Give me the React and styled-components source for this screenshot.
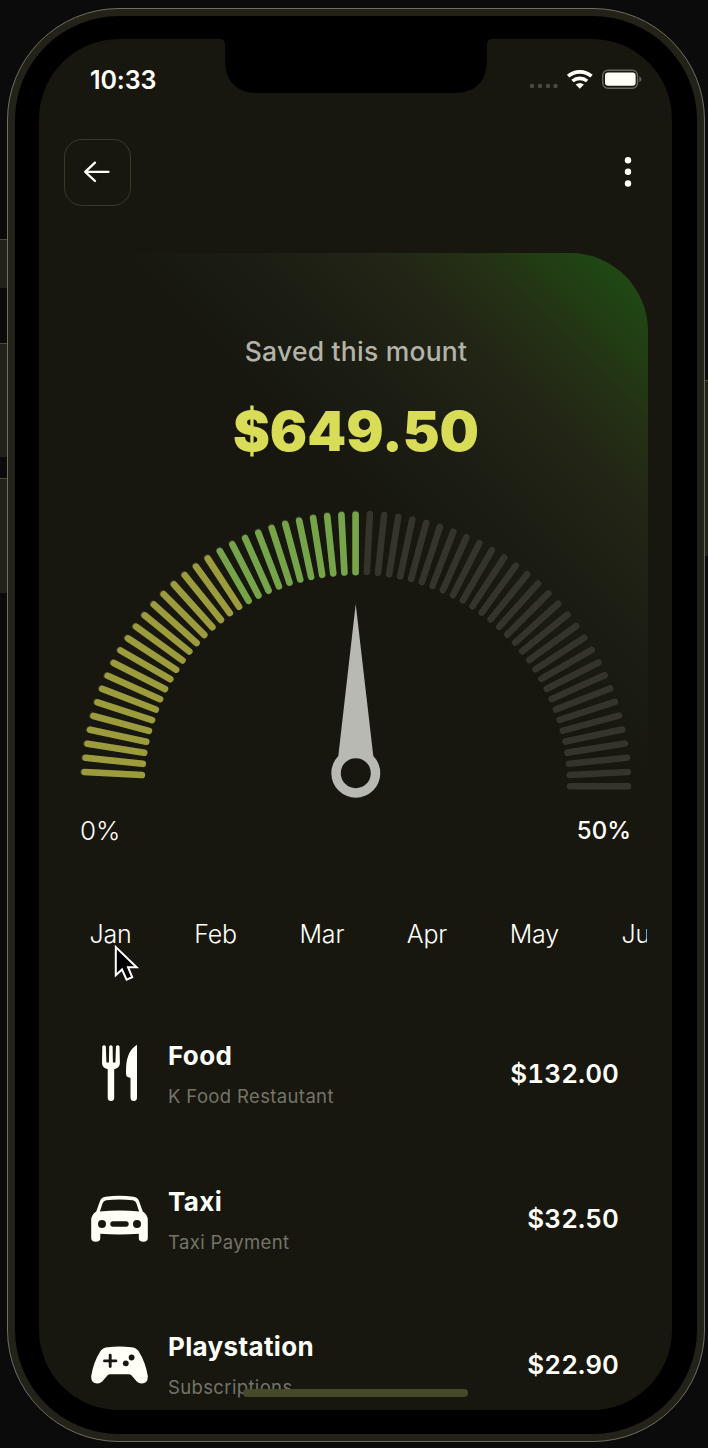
import React from "react";
import styled, { createGlobalStyle } from "styled-components";

const colors = {
  backdrop: "#0b0b0b",
  screen: "#171710",
  rim: "#222219",
  rimLine: "#6e6e62",
  white: "#fffff8",
  muted: "#747468",
  lime: "#d8dc56",
  tickOff: "#34342c",
  tickYellow: "#9c9c3c",
  tickGreen: "#76a448",
  needle: "#b9b9b4",
};

const GlobalStyle = createGlobalStyle`
  * { box-sizing: border-box; }
  body {
    margin: 0;
    background: ${colors.backdrop};
    font-family: Inter, "Liberation Sans", sans-serif;
    color: ${colors.white};
    overflow: hidden;
  }
`;

const Page = styled.main`
  position: relative;
  width: 708px;
  height: 1448px;
  padding: 8px 3px 6px 7px;
  overflow: hidden;
`;

const SideButton = styled.span`
  position: absolute;
  left: 0;
  top: ${(p) => p.$top}px;
  width: 7px;
  height: ${(p) => p.$height}px;
  background: ${colors.rim};
  border-top: 1px solid #4a4a3e;
`;

const PowerButton = styled.span`
  position: absolute;
  right: 0;
  top: 380px;
  width: 3px;
  height: 176px;
  background: ${colors.rim};
  border-top: 1px solid #4a4a3e;
`;

const Rim = styled.div`
  position: relative;
  height: 1434px;
  padding: 7px;
  border: 1px solid ${colors.rimLine};
  border-radius: 112px;
  background: ${colors.rim};
`;

const Bezel = styled.div`
  height: 1418px;
  padding: 23px 25px 24px 24px;
  border-radius: 104px;
  background: #000;
`;

const Screen = styled.div`
  position: relative;
  height: 1371px;
  border-radius: 80px;
  background: ${colors.screen};
  overflow: hidden;
`;

const NotchShape = styled.svg`
  position: absolute;
  left: 180px;
  top: 0;
`;

const StatusBar = styled.div`
  display: flex;
  align-items: center;
  justify-content: space-between;
  height: 81px;
  padding: 0 30px 0 51px;
`;

const Clock = styled.time`
  font-size: 25px;
  line-height: 30px;
  font-weight: 600;
  letter-spacing: -0.1px;
`;

const Header = styled.header`
  display: flex;
  align-items: center;
  justify-content: space-between;
  height: 67px;
  margin-top: 19px;
  padding: 0 40px 0 25px;
`;

const BackButton = styled.button`
  display: flex;
  align-items: center;
  justify-content: center;
  width: 67px;
  height: 67px;
  padding: 0 1px 1px 0;
  border: 1px solid #3a3a22;
  border-radius: 18px;
  background: transparent;
  color: ${colors.white};
`;

const MenuButton = styled.button`
  display: flex;
  padding: 0 0 1px;
  border: 0;
  background: transparent;
  color: ${colors.white};
`;

const Card = styled.section`
  margin: 47px 24px 0 25px;
  padding: 83px 16px 25px;
  border-radius: 0 78px 0 0;
  background: linear-gradient(225deg, #204f14 0%, #204214 7%, #243214 14%, #222416 23%, #1b1d13 34%, ${colors.screen} 44%);
`;

const CardTitle = styled.h1`
  margin: 0;
  font-size: 26.5px;
  line-height: 31px;
  font-weight: 500;
  text-align: center;
  color: #b3b3a8;
  letter-spacing: 0.22px;
`;

const Total = styled.p`
  margin: 33px 0 0;
  font-size: 55.5px;
  line-height: 61px;
  font-weight: 900;
  text-align: center;
  color: ${colors.lime};
`;

const GaugeFigure = styled.svg`
  display: block;
  margin-top: 44px;
`;

const Scale = styled.div`
  display: flex;
  justify-content: space-between;
  margin-top: 11px;
  line-height: 30px;
`;

const ScaleStart = styled.span`
  font-size: 26px;
  font-weight: 350;
`;

const ScaleEnd = styled.span`
  font-size: 24px;
  font-weight: 550;
  padding-right: 1px;
`;

const Months = styled.nav`
  display: flex;
  gap: 62.5px;
  height: 40px;
  margin: 43px 25px 0 25px;
  padding-left: 25.5px;
  overflow: hidden;
`;

const Month = styled.span`
  flex: none;
  font-size: 25px;
  line-height: 40px;
  font-weight: 350;
  letter-spacing: -0.15px;
`;

const ExpenseList = styled.ul`
  display: flex;
  flex-direction: column;
  gap: 65.5px;
  margin: 79.5px 0 0;
  padding: 0 53px 0 52px;
  list-style: none;
`;

const Expense = styled.li`
  display: flex;
  align-items: center;
  height: 80px;
`;

const ExpenseText = styled.div`
  display: flex;
  flex-direction: column;
  gap: 11px;
  flex: 1;
  padding-left: 20px;
`;

const ExpenseName = styled.span`
  font-size: 26px;
  line-height: 34px;
  font-weight: 650;
  letter-spacing: 0.35px;
`;

const ExpenseNote = styled.span`
  font-size: 18.5px;
  line-height: 24px;
  font-weight: 400;
  letter-spacing: 0.36px;
  color: ${colors.muted};
`;

const ExpenseAmount = styled.span`
  font-size: 26px;
  line-height: 34px;
  font-weight: 600;
  font-variant-numeric: tabular-nums;
  letter-spacing: 0.1px;
`;

const HomeIndicator = styled.span`
  position: absolute;
  left: 204px;
  top: 1350px;
  width: 225px;
  height: 8px;
  border-radius: 4px;
  background: #48482a;
`;

const Pointer = styled.svg`
  position: absolute;
  left: 113px;
  top: 942px;
`;

const Notch = () => (
  <NotchShape width="274" height="54" viewBox="0 0 274 54">
    <path
      d="M0 0H274C270 0 268 2 268 6V20C268 42 257 54 235 54H39C17 54 6 42 6 20V6C6 2 4 0 0 0Z"
      fill="#000"
    />
  </NotchShape>
);

const StatusIcons = () => (
  <svg width="114" height="24" viewBox="0 0 114 24">
    <g fill="#4a4a3e">
      <circle cx="4" cy="18" r="2.2" />
      <circle cx="12" cy="18" r="2.2" />
      <circle cx="20" cy="18" r="2.2" />
      <circle cx="27.5" cy="18" r="2.2" />
    </g>
    <g fill="none" stroke={colors.white} strokeWidth="3.6">
      <path d="M40.1 8.2A18 18 0 0 1 63.5 8.2" />
      <path d="M44.5 13A11.3 11.3 0 0 1 59.1 13" />
    </g>
    <path d="M47.7 16.6A6.5 6.5 0 0 1 55.9 16.6L51.8 20.8Z" fill={colors.white} />
    <rect x="74.7" y="2.2" width="34.8" height="18" rx="5.2" fill="none" stroke="#66665a" strokeWidth="1.4" />
    <rect x="77" y="4.6" width="30.6" height="13.2" rx="3" fill={colors.white} />
    <path d="M111.3 8.3Q113.3 9.2 113.3 11.3T111.3 14.3Z" fill="#66665a" />
  </svg>
);

const ArrowLeft = () => (
  <svg width="28" height="24" viewBox="0 0 28 24" fill="none" stroke="currentColor" strokeWidth="2.3" strokeLinecap="round" strokeLinejoin="round">
    <path d="M25.5 11.8H2.2M12 2.6L2.2 11.8L12 21" />
  </svg>
);

const MoreDots = () => (
  <svg width="8" height="32" viewBox="0 0 8 32" fill="currentColor">
    <circle cx="4" cy="4.2" r="3.2" />
    <circle cx="4" cy="15.8" r="3.2" />
    <circle cx="4" cy="27.5" r="3.2" />
  </svg>
);

const STEP = 3;
const CENTER = { x: 275.6, y: 281.2 };

const Tick = ({ angle, outer, inner, color, width }) => (
  <line
    x1={CENTER.x - outer}
    x2={CENTER.x - inner}
    y1={CENTER.y}
    y2={CENTER.y}
    stroke={color}
    strokeWidth={width}
    strokeLinecap="round"
    transform={`rotate(${angle} ${CENTER.x} ${CENTER.y})`}
  />
);

const Gauge = () => {
  const all = Array.from({ length: 60 }, (_, i) => (i + 1) * STEP);
  const active = all.filter((a) => a <= 90);
  return (
    <GaugeFigure width="551" height="300" viewBox="0 0 551 300">
      {all.map((a) => (
        <Tick key={a} angle={a} outer={272.6} inner={214.6} color={colors.tickOff} width={6.6} />
      ))}
      {active.map((a) => (
        <Tick key={a} angle={a} outer={271.4} inner={214} color={a < 60 ? colors.tickYellow : colors.tickGreen} width={6.6} />
      ))}
      <path
        fillRule="evenodd"
        fill={colors.needle}
        d="M275.7 99L293.3 251A24.5 24.5 0 1 1 258.3 251ZM275.8 253.2A15 15 0 1 0 275.8 283.2A15 15 0 1 0 275.8 253.2Z"
      />
    </GaugeFigure>
  );
};

const CutleryIcon = () => (
  <svg width="57" height="59" viewBox="0 0 57 59" fill={colors.white}>
    <path d="M11.3 2.2Q13 .2 14.8 2.2L15.4 18.5H17.9L18.2 2.2Q19.9 .2 21.6 2.2L21.9 18.5H24.4L25 2.2Q26.8 .2 28.5 2.2L28.9 19Q28.9 23.7 23.2 25.2V53.5Q23.2 57 20 57T16.7 53.5V25.2Q11 23.7 11 19Z" />
    <path d="M46 .8V53.5Q46 57 42.8 57T39.5 53.5V34L36.2 32.7Q35 32 35 28Q34.6 7.5 46 .8Z" />
  </svg>
);

const CarIcon = () => (
  <svg width="57" height="48" viewBox="0 0 57 48" fill={colors.white} fillRule="evenodd">
    <path d="M14.5 1.8Q28.5 -.1 42.5 1.8Q46.5 2.3 48 6L51.8 16.5Q56.8 20 56.8 25V43Q56.8 46.8 52.3 46.8T47.8 43V38.8Q28.5 40.2 9.3 38.8V43Q9.3 46.8 4.8 46.8T.2 43V25Q.2 20 5.2 16.5L9 6Q10.5 2.3 14.5 1.8ZM15.2 5.3Q12.5 5.6 11.6 8.2L8.9 16.6Q28.5 14.4 48.1 16.6L45.4 8.2Q44.5 5.6 41.8 5.3Q28.5 3.7 15.2 5.3ZM11 25A4 4 0 1 0 11 33A4 4 0 1 0 11 25ZM46 25A4 4 0 1 0 46 33A4 4 0 1 0 46 25ZM22 26.3A2.7 2.7 0 0 0 22 31.7H35A2.7 2.7 0 0 0 35 26.3Z" />
  </svg>
);

const GamepadIcon = () => (
  <svg width="57" height="38" viewBox="0 0 57 38" fill={colors.white} fillRule="evenodd">
    <path d="M17 1.3Q28.5 -.2 40 1.3Q44.8 1.6 47.5 5Q54.5 16 56.8 30Q57.2 37.4 50.8 37.4Q46.8 37.4 44.5 34L40.6 29.5Q39.5 28.3 37.8 28.3H19.2Q17.5 28.3 16.4 29.5L12.5 34Q10.2 37.4 6.2 37.4Q-.2 37.4 .2 30Q2.5 16 9.5 5Q12.2 1.6 17 1.3Z" />
    <path d="M19.2 9.3V20.5M13.5 14.9H24.9" stroke={colors.screen} strokeWidth="2.9" strokeLinecap="round" />
    <circle cx="40.6" cy="11.5" r="2.9" fill={colors.screen} />
    <circle cx="34.8" cy="17.3" r="2.9" fill={colors.screen} />
  </svg>
);

const months = ["Jan", "Feb", "Mar", "Apr", "May", "Jun"];

const expenses = [
  { name: "Food", note: "K Food Restautant", amount: "$132.00", Icon: CutleryIcon },
  { name: "Taxi", note: "Taxi Payment", amount: "$32.50", Icon: CarIcon },
  { name: "Playstation", note: "Subscriptions", amount: "$22.90", Icon: GamepadIcon },
];

export default function App() {
  return (
    <>
      <GlobalStyle />
      <Page>
        <SideButton $top={239} $height={49} />
        <SideButton $top={343} $height={114} />
        <SideButton $top={478} $height={115} />
        <PowerButton />
        <Rim>
          <Bezel>
            <Screen>
              <Notch />
              <StatusBar>
                <Clock>10:33</Clock>
                <StatusIcons />
              </StatusBar>
              <Header>
                <BackButton aria-label="Back">
                  <ArrowLeft />
                </BackButton>
                <MenuButton aria-label="More">
                  <MoreDots />
                </MenuButton>
              </Header>
              <Card>
                <CardTitle>Saved this mount</CardTitle>
                <Total>$649.50</Total>
                <Gauge />
                <Scale>
                  <ScaleStart>0%</ScaleStart>
                  <ScaleEnd>50%</ScaleEnd>
                </Scale>
              </Card>
              <Months>
                {months.map((m) => (
                  <Month key={m}>{m}</Month>
                ))}
              </Months>
              <ExpenseList>
                {expenses.map(({ name, note, amount, Icon }) => (
                  <Expense key={name}>
                    <Icon />
                    <ExpenseText>
                      <ExpenseName>{name}</ExpenseName>
                      <ExpenseNote>{note}</ExpenseNote>
                    </ExpenseText>
                    <ExpenseAmount>{amount}</ExpenseAmount>
                  </Expense>
                ))}
              </ExpenseList>
              <HomeIndicator />
            </Screen>
          </Bezel>
        </Rim>
        <Pointer width="28" height="42" viewBox="0 0 28 42">
          <path d="M2.8 5V33.2L9 27.5L13.6 37.6L19.2 35.2L15 25.2H23.6Z" fill="#000" stroke="#fff" strokeWidth="2" />
        </Pointer>
      </Page>
    </>
  );
}
